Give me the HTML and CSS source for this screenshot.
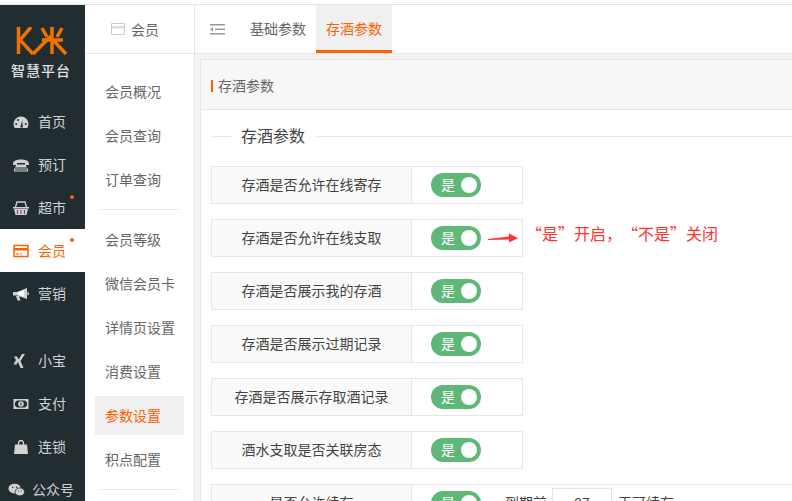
FILE: index.html
```html
<!DOCTYPE html>
<html lang="zh-CN">
<head>
    <meta charset="UTF-8">
    <title>存酒参数</title>
    <link rel="stylesheet" href="styles.css">
</head>
<body>
    <div class="app">
        <aside class="sidebar">
            <div class="logo">
                <svg class="logo-mark" viewBox="0 0 52 28" width="52" height="28">
                    <g fill="none" stroke="#f07000" stroke-width="3.500">
                        <path d="M2.500 0V27"/>
                        <path d="M15 0L4 13L17 27"/>
                        <path d="M17 27L35 9"/>
                        <path d="M26 13H47"/>
                        <path d="M36 0V27"/>
                        <path d="M37 13L50 27"/>
                        <path d="M26 1L31 10M46 1L41 10"/>
                    </g>
                </svg>
                <div class="logo-text">智慧平台</div>
            </div>
            <ul class="side-menu">
                <li>
                    <svg class="side-icon" viewBox="0 0 16 14"><path d="M8 1.500a7.500 7.500 0 0 0-7.500 7.500c0 1.500.4 2.800 1.200 4h12.600c.8-1.200 1.200-2.500 1.200-4A7.500 7.500 0 0 0 8 1.500z" fill="#d2d2d2"/><path d="M7.200 12.500l2-7 .7 7z" fill="#222d32"/><circle cx="3.200" cy="9" r="1" fill="#222d32"/><circle cx="5" cy="5" r="1" fill="#222d32"/><circle cx="12.800" cy="9" r="1" fill="#222d32"/></svg>
                    <span>首页</span>
                </li>
                <li>
                    <svg class="side-icon" viewBox="0 0 16 14"><path d="M0 5.500c0-5.500 16-5.500 16 0v1.500h-4V5H4v2H0z" fill="#d2d2d2"/><path d="M3.500 6.500h9L14 9.500H2z" fill="#d2d2d2"/><path d="M1 10.500h14V13.500H1z" fill="#d2d2d2"/><path d="M3 11v2M5 11v2M7 11v2M9 11v2M11 11v2M13 11v2" stroke="#222d32"/></svg>
                    <span>预订</span>
                </li>
                <li class="has-dot">
                    <svg class="side-icon" viewBox="0 0 16 14"><path d="M0 6h16v1.500H0z" fill="#d2d2d2"/><path d="M1 8h14l-1.500 6h-11z" fill="#d2d2d2"/><path d="M2.500 6L4 1h8l1.500 5" fill="none" stroke="#d2d2d2" stroke-width="1.300"/><path d="M4.500 9v4M8 9v4M11.500 9v4" stroke="#7a4a80" stroke-width="1.200"/></svg>
                    <span>超市</span>
                </li>
                <li class="has-dot active">
                    <svg class="side-icon" viewBox="0 0 16 14"><path d="M1 1.500h14v11H1z" fill="none" stroke="#ff6000" stroke-width="1.500"/><path d="M1 4h14v2.500H1z" fill="#ff6000"/><path d="M3 9.500h3v1H3zM7 9.500h2v1H7z" fill="#ff6000"/></svg>
                    <span>会员</span>
                </li>
                <li class="group-end">
                    <svg class="side-icon" viewBox="0 0 16 14"><path d="M0 5h4L14 1v11L4 8.500H0z" fill="#d2d2d2"/><path d="M11 3.500L5 5.600v2l6 2z" fill="#fff"/><path d="M3 9h3l1.500 4.500H4.500z" fill="#d2d2d2"/><path d="M14.500 4.500l1.500 1.500v1.500l-1.500 1z" fill="#d2d2d2"/></svg>
                    <span>营销</span>
                </li>
                <li>
                    <svg class="side-icon" viewBox="0 0 16 14"><path d="M1 2.500h3L6 6 3.500 10.500H.5L3 6z" fill="#d2d2d2"/><path d="M9 0h3L7.500 7l3 7h-3L4.700 7z" fill="#d2d2d2"/></svg>
                    <span>小宝</span>
                </li>
                <li>
                    <svg class="side-icon" viewBox="0 0 16 14"><rect x=".5" y="2" width="15" height="10" fill="#d2d2d2"/><path d="M4 3.500h8l2 2v3l-2 2H4l-2-2v-3z" fill="#222d32"/><circle cx="8" cy="7" r="2.800" fill="#d2d2d2"/><path d="M8 5.500v3" stroke="#222d32"/></svg>
                    <span>支付</span>
                </li>
                <li>
                    <svg class="side-icon" viewBox="0 0 16 14"><path d="M2 4.500h12l1 9.500H1z" fill="#d2d2d2"/><path d="M5.500 6V3a2.500 2.500 0 0 1 5 0v3" fill="none" stroke="#d2d2d2" stroke-width="1.300"/></svg>
                    <span>连锁</span>
                </li>
                <li class="wechat">
                    <svg class="side-icon" viewBox="0 0 18 14"><ellipse cx="7" cy="5.500" rx="6.500" ry="5.200" fill="#d2d2d2"/><ellipse cx="12.500" cy="9" rx="5" ry="4.200" fill="#d2d2d2" stroke="#222d32" stroke-width=".8"/><circle cx="5" cy="4" r=".8" fill="#222d32"/><circle cx="9" cy="4" r=".8" fill="#222d32"/><circle cx="11" cy="8" r=".6" fill="#222d32"/><circle cx="14" cy="8" r=".6" fill="#222d32"/></svg>
                    <span>公众号</span>
                </li>
            </ul>
        </aside>

        <nav class="subnav">
            <div class="subnav-title">
                <svg viewBox="0 0 14 12" width="14" height="12"><path d="M.5 .5h13v11H.5z" fill="none" stroke="#ccc"/><path d="M1 3h12v2.500H1z" fill="#ddd"/></svg>
                <span>会员</span>
            </div>
            <ul class="subnav-list">
                <li>会员概况</li>
                <li>会员查询</li>
                <li>订单查询</li>
                <li class="sep"></li>
                <li>会员等级</li>
                <li>微信会员卡</li>
                <li>详情页设置</li>
                <li>消费设置</li>
                <li class="active">参数设置</li>
                <li>积点配置</li>
                <li class="sep"></li>
            </ul>
        </nav>

        <main class="main">
            <div class="tabs">
                <svg class="tabs-toggle" viewBox="0 0 15 13" width="15" height="13"><path d="M0 1h15v1.500H0zM5 5.500h10V7H5zM0 10h15v1.500H0z" fill="#999"/><path d="M0 6.200L3 4v4.500z" fill="#999"/></svg>
                <div class="tab">基础参数</div>
                <div class="tab active">存酒参数</div>
            </div>
            <section class="panel">
                <div class="panel-head"><span>存酒参数</span></div>
                <div class="panel-body">
                    <div class="legend"><span>存酒参数</span></div>
                    <div class="row">
                        <div class="row-label">存酒是否允许在线寄存</div>
                        <div class="row-value"><div class="switch">是<i></i></div></div>
                    </div>
                    <div class="row with-note">
                        <div class="row-label">存酒是否允许在线支取</div>
                        <div class="row-value">
                            <div class="switch">是<i></i></div>
                            <svg class="arrow" viewBox="0 0 30 10" width="30" height="10"><path d="M0 6L21 3.500V0.500L30 5L21 9.500V6.500L0 7z" fill="#f33"/></svg>
                        </div>
                        <div class="note">“是”开启<span class="note-comma">，</span>“不是”关闭</div>
                    </div>
                    <div class="row">
                        <div class="row-label">存酒是否展示我的存酒</div>
                        <div class="row-value"><div class="switch">是<i></i></div></div>
                    </div>
                    <div class="row">
                        <div class="row-label">存酒是否展示过期记录</div>
                        <div class="row-value"><div class="switch">是<i></i></div></div>
                    </div>
                    <div class="row">
                        <div class="row-label">存酒是否展示存取酒记录</div>
                        <div class="row-value"><div class="switch">是<i></i></div></div>
                    </div>
                    <div class="row">
                        <div class="row-label">酒水支取是否关联房态</div>
                        <div class="row-value"><div class="switch">是<i></i></div></div>
                    </div>
                    <div class="row row-wide">
                        <div class="row-label">是否允许续存</div>
                        <div class="row-value">
                            <div class="switch">是<i></i></div>
                            <span class="renew">到期前</span>
                            <div class="days">97</div>
                            <span class="renew">天可续存</span>
                        </div>
                    </div>
                </div>
            </section>
        </main>
    </div>
</body>
</html>
```

FILE: styles.css
```css
* {
    box-sizing: border-box;
}
html, body {
    height: 100%;
}
body {
    margin: 0;
    overflow: hidden;
    font-family: "Noto Sans CJK SC", "Liberation Sans", sans-serif;
    font-size: 14px;
    color: #666;
    background: #fff;
}
ul {
    list-style: none;
    margin: 0;
    padding: 0;
}
.app {
    display: flex;
    height: 501px;
    padding-top: 5px;
    overflow: hidden;
    box-shadow: inset 0 4px 0 #fff, inset 0 5px 0 #e2e4e8;
}

/* dark left bar */
.sidebar {
    width: 85px;
    flex-shrink: 0;
    background: #222d32;
    color: #d2d2d2;
}
.logo {
    height: 79px;
    padding-top: 22px;
    text-align: center;
}
.logo-mark {
    display: block;
    margin-left: 16px;
}
.logo-text {
    margin-top: 7px;
    padding-right: 3px;
    font-size: 14px;
    font-weight: 500;
    line-height: 16px;
    letter-spacing: 1px;
    color: #e0e0e0;
}
.side-menu {
    padding-top: 16px;
}
.side-menu li {
    position: relative;
    display: flex;
    align-items: center;
    height: 43px;
    padding-left: 13px;
}
.side-menu li span {
    padding-bottom: 2px;
}
.side-icon {
    width: 16px;
    height: 14px;
    margin-right: 9px;
    flex-shrink: 0;
}
.side-menu .active {
    background: #fff;
    color: #ff6000;
}
.side-menu .group-end {
    margin-bottom: 24px;
}
.side-menu .has-dot::after {
    content: "";
    position: absolute;
    top: 9px;
    left: 70px;
    width: 4px;
    height: 4px;
    border-radius: 50%;
    background: #ff5722;
}
.side-menu .wechat {
    padding-left: 8px;
}
.side-menu .wechat .side-icon {
    width: 17px;
    margin-right: 7px;
}

/* second column */
.subnav {
    width: 110px;
    flex-shrink: 0;
    border-right: 1px solid #e6e6e6;
    background: #fff;
}
.subnav-title {
    display: flex;
    align-items: center;
    justify-content: center;
    gap: 6px;
    height: 49px;
    border-bottom: 1px solid #e6e6e6;
    padding-right: 9px;
}
.subnav-list {
    padding: 15px 10px 0;
}
.subnav-list li {
    height: 44px;
    padding-left: 10px;
    line-height: 44px;
}
.subnav-list .sep {
    height: 1px;
    margin: 8px 5px 7px;
    padding: 0;
    background: #e6e6e6;
}
.subnav-list .active {
    height: 39px;
    margin: 3px 0 2px;
    line-height: 39px;
    background: #f0f0f0;
    color: #ff6000;
}

/* right side */
.main {
    flex: 1;
    min-width: 0;
    display: flex;
    flex-direction: column;
    background: #f3f3f3;
}
.tabs {
    display: flex;
    align-items: stretch;
    flex-shrink: 0;
    height: 49px;
    padding-left: 15px;
    border-bottom: 1px solid #e6e6e6;
    background: #fff;
}
.tabs-toggle {
    align-self: center;
    margin-right: 15px;
}
.tab {
    width: 76px;
    line-height: 47px;
    text-align: center;
}
.tab.active {
    background: #f0f0f0;
    border-bottom: 3px solid #ff6000;
    color: #ff6000;
}
.panel {
    flex: 1;
    margin: 5px -20px 0 5px;
    border: 1px solid #e6e6e6;
    background: #fff;
}
.panel-head {
    height: 50px;
    padding-left: 10px;
    border-bottom: 1px solid #e6e6e6;
    background: #f7f7f7;
    line-height: 50px;
}
.panel-head span {
    display: inline-block;
    height: 12px;
    padding-left: 5px;
    border-left: 2px solid #ff6000;
    line-height: 10px;
}
.panel-body {
    padding: 16px 10px 0;
}
.legend {
    display: flex;
    align-items: center;
    height: 20px;
    margin-bottom: 20px;
    color: #444;
    font-size: 16px;
}
.legend span {
    padding-bottom: 2px;
}
.legend::before {
    content: "";
    width: 20px;
    height: 1px;
    margin-right: 10px;
    background: #e6e6e6;
}
.legend::after {
    content: "";
    flex: 1;
    height: 1px;
    margin-left: 10px;
    background: #e6e6e6;
}
.row {
    display: flex;
    align-items: center;
    margin-bottom: 15px;
    color: #444;
}
.row-label {
    width: 201px;
    height: 38px;
    border: 1px solid #e6e6e6;
    background: #fafafa;
    line-height: 34px;
    text-align: center;
}
.row-value {
    display: flex;
    align-items: center;
    width: 112px;
    height: 38px;
    margin-left: -1px;
    padding-left: 19px;
    border: 1px solid #e6e6e6;
}
.switch {
    position: relative;
    flex-shrink: 0;
    width: 50px;
    height: 24px;
    padding-left: 10px;
    border-radius: 12px;
    background: #5fb878;
    color: #fff;
    line-height: 22px;
}
.switch i {
    position: absolute;
    top: 4px;
    right: 4px;
    width: 16px;
    height: 16px;
    border-radius: 50%;
    background: #fff;
}
.arrow {
    flex-shrink: 0;
    margin-left: 7px;
}
.note {
    margin-left: 3px;
    padding-bottom: 10px;
    color: #f33;
    font-size: 16px;
}
.note-comma {
    margin-right: 8px;
}
.row-wide {
    align-items: flex-start;
}
.row-wide .row-value {
    flex: 1;
}
.renew {
    flex-shrink: 0;
    margin-left: 24px;
    padding-bottom: 2px;
}
.days {
    flex-shrink: 0;
    width: 60px;
    height: 38px;
    margin: 7px 6px 0 5px;
    border: 1px solid #e6e6e6;
    line-height: 28px;
    text-align: center;
}
.days + .renew {
    margin-left: 0;
}
```
